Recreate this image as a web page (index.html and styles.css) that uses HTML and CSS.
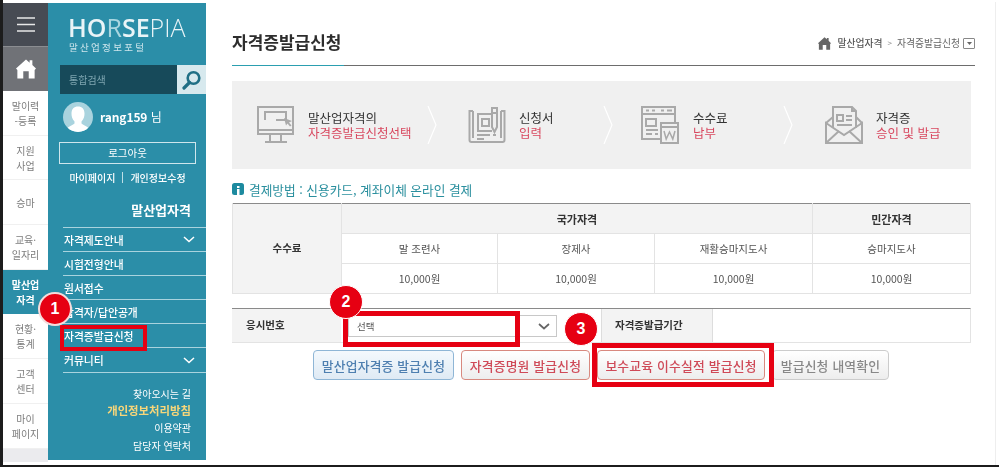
FILE: index.html
```html
<!DOCTYPE html>
<html lang="ko">
<head>
<meta charset="utf-8">
<title>자격증발급신청</title>
<link rel="stylesheet" href="styles.css">
</head>
<body>
<div class="page">
  <nav class="rail">
    <div class="rail-menu"><svg width="18" height="15" viewBox="0 0 18 15"><path d="M0 1h18M0 7.500h18M0 14h18" stroke="#e8e8e8" stroke-width="1.500"/></svg></div>
    <div class="rail-home"><svg width="20" height="20" viewBox="0 0 22 21"><path d="M11 0 L15 3.500V1h3v5l4 4-1.500 1.500V21H14v-8H8v8H1.500V11.500L0 10z" fill="#fff"/></svg></div>
    <a class="rail-item">말이력<br>-등록</a>
    <a class="rail-item">지원<br>사업</a>
    <a class="rail-item">승마</a>
    <a class="rail-item">교육·<br>일자리</a>
    <a class="rail-item active">말산업<br>자격</a>
    <a class="rail-item">현황·<br>통계</a>
    <a class="rail-item">고객<br>센터</a>
    <a class="rail-item">마이<br>페이지</a>
    <div class="rail-end"></div>
  </nav>

  <aside class="side">
    <div class="logo">
      <div class="logo-word"><b>HO</b><i>R</i><b>SE</b><span>PIA</span></div>
      <div class="logo-sub">말산업정보포털</div>
    </div>
    <div class="search">
      <div class="search-input">통합검색</div>
      <div class="search-btn"><svg width="20" height="20" viewBox="0 0 20 20"><circle cx="11.500" cy="8" r="5.800" fill="none" stroke="#1f6f85" stroke-width="2.600"/><path d="M7.500 12.500 2 18" stroke="#1f6f85" stroke-width="3.200" stroke-linecap="round"/></svg></div>
    </div>
    <div class="user">
      <svg class="avatar" width="30" height="30" viewBox="0 0 30 30"><circle cx="15" cy="15" r="15" fill="#a9d3de"/><clipPath id="av"><circle cx="15" cy="15" r="15"/></clipPath><g clip-path="url(#av)"><path d="M3 31c0-7 6-7 8.500-9.500v-2C9 17 8.500 14 8.500 11.500 8.500 7 11 4.500 15 4.500s6.500 2.500 6.500 7c0 2.500-.5 5.500-3 8v2C21 24 27 24 27 31z" fill="#fff"/></g></svg>
      <span class="user-name"><b>rang159</b> 님</span>
    </div>
    <div class="logout">로그아웃</div>
    <div class="user-links"><span>마이페이지</span><em></em><span>개인정보수정</span></div>
    <h2 class="side-title">말산업자격</h2>
    <ul class="side-menu">
      <li>자격제도안내<svg width="12" height="7" viewBox="0 0 12 7"><path d="M1 1l5 4.500L11 1" fill="none" stroke="#fff" stroke-width="1.500"/></svg></li>
      <li>시험전형안내</li>
      <li>원서접수</li>
      <li>합격자/답안공개</li>
      <li>자격증발급신청</li>
      <li>커뮤니티<svg width="12" height="7" viewBox="0 0 12 7"><path d="M1 1l5 4.500L11 1" fill="none" stroke="#fff" stroke-width="1.500"/></svg></li>
    </ul>
    <div class="side-foot">
      <div>찾아오시는 길</div>
      <div class="privacy">개인정보처리방침</div>
      <div>이용약관</div>
      <div>담당자 연락처</div>
    </div>
  </aside>

  <main class="main">
    <header class="head">
      <h1>자격증발급신청</h1>
      <div class="crumb">
        <svg width="13" height="13" viewBox="0 0 22 21"><path d="M11 0 L15 3.500V1h3v5l4 4-1.500 1.500V21H14v-8H8v8H1.500V11.500L0 10z" fill="#666"/></svg>
        <b>말산업자격</b><i>&gt;</i><span>자격증발급신청</span><u><svg width="5" height="3" viewBox="0 0 5 3"><path d="M0 0h5L2.500 3z" fill="#666"/></svg></u>
      </div>
    </header>

    <section class="steps">
      <div class="step s1">
        <svg width="38" height="38" viewBox="0 0 38 38" fill="none" stroke="#a9a9a9" stroke-width="2"><rect x="1" y="1" width="35" height="27"/><path d="M1 24h35M13 28v7M24 28v7M8 36h22" /><path d="M8 14V6h21v8H19"/><path d="M27 12l8 3-3 1.500 2.500 3-1.500 1-2.500-3-1.500 2z" fill="#a9a9a9" stroke="none"/></svg>
        <div><p>말산업자격의</p><p class="pink">자격증발급신청선택</p></div>
      </div>
      <div class="chev"><svg width="10" height="38" viewBox="0 0 10 38"><path d="M1 0l8 19-8 19" fill="none" stroke="#fff" stroke-width="1.200"/></svg></div>
      <div class="step s2">
        <svg width="38" height="38" viewBox="0 0 38 38" fill="none" stroke="#a9a9a9" stroke-width="2"><path d="M5 5H1.500v29c0 1 1 2 2 2h31c1 0 2-1 2-2V5H33"/><path d="M5 5v27M33 5v27"/><path d="M24 8H10v17h14"/><rect x="14" y="13" width="7" height="7"/><path d="M24 2h5v19l-2.500 5-2.500-5zM24 7h5M9 29h13M25 29h3M9 33h7"/></svg>
        <div><p>신청서</p><p class="pink">입력</p></div>
      </div>
      <div class="chev"><svg width="10" height="38" viewBox="0 0 10 38"><path d="M1 0l8 19-8 19" fill="none" stroke="#fff" stroke-width="1.200"/></svg></div>
      <div class="step s3">
        <svg width="38" height="38" viewBox="0 0 38 38" fill="none" stroke="#a9a9a9" stroke-width="2"><path d="M20 33H1V1h33v16M1 8h33"/><path d="M5 4.500h3M11 4.500h3M20 4.500h3M26 4.500h5M5 13h10v7H5zM5 24h12M5 28h6M14 28h3"/><rect x="20" y="17" width="17" height="20"/><path d="M20 21h17"/><path d="M23 25l2.200 8 3.300-7 3.300 7 2.200-8" stroke-width="1.500"/></svg>
        <div><p>수수료</p><p class="pink">납부</p></div>
      </div>
      <div class="chev"><svg width="10" height="38" viewBox="0 0 10 38"><path d="M1 0l8 19-8 19" fill="none" stroke="#fff" stroke-width="1.200"/></svg></div>
      <div class="step s4">
        <svg width="38" height="38" viewBox="0 0 38 38" fill="none" stroke="#a9a9a9" stroke-width="2"><path d="M1 17v20h36V17L19 29z"/><path d="M1 37l13-12M37 37L24 25M1 17l7-6M37 17l-6-6M8 22V1h19l4 4v17"/><path d="M27 1v4h4M12 9h6v6h-6zM21 10h6M21 14h6M12 19h15" /></svg>
        <div><p>자격증</p><p class="pink">승인 및 발급</p></div>
      </div>
    </section>

    <p class="pay"><svg width="12" height="12" viewBox="0 0 12 12"><rect width="12" height="12" rx="2.500" fill="#1d8a9f"/><path d="M5 3h2.500v2H5zM5 6h2.500v6H5z" fill="#fff"/></svg>결제방법 : 신용카드, 계좌이체 온라인 결제</p>

    <table class="fee">
      <colgroup><col class="c1"><col class="c2"><col class="c3"><col class="c4"><col></colgroup>
      <tr><th rowspan="3" class="lead">수수료</th><th colspan="3">국가자격</th><th>민간자격</th></tr>
      <tr><td>말 조련사</td><td>장제사</td><td>재활승마지도사</td><td>승마지도사</td></tr>
      <tr><td>10,000원</td><td>10,000원</td><td>10,000원</td><td>10,000원</td></tr>
    </table>

    <div class="exam">
      <div class="exam-th first">응시번호</div>
      <div class="exam-sel"><div class="select"><span>선택</span><svg width="12" height="7" viewBox="0 0 12 7"><path d="M1 1l5 4.500L11 1" fill="none" stroke="#666" stroke-width="1.700"/></svg></div></div>
      <div class="exam-th second">자격증발급기간</div>
      <div class="exam-td"></div>
    </div>

    <div class="buttons">
      <a class="btn blue">말산업자격증 발급신청</a>
      <a class="btn red">자격증명원 발급신청</a>
      <a class="btn red wide">보수교육 이수실적 발급신청</a>
      <a class="btn gray">발급신청 내역확인</a>
    </div>
  </main>
</div>

<div class="mark box1"></div>
<div class="mark box2"></div>
<div class="mark box3"></div>
<div class="badge b1">1</div>
<div class="badge b2">2</div>
<div class="badge b3">3</div>
</body>
</html>
```
FILE: styles.css
```css
* { box-sizing: border-box; }
html, body { margin: 0; padding: 0; }
body {
  width: 999px; height: 467px; overflow: hidden; position: relative;
  background: #fff; color: #333;
  font-family: "Noto Sans CJK KR", "Noto Sans", sans-serif;
  border-left: 3px solid #1c1c1c;
  border-bottom: 2px solid #1c1c1c;
}
.page { display: flex; height: 465px; padding-top: 1px; margin-top: 2px; width: 993px; border-top: 0; border-right: 1px solid #eee; filter: blur(.35px); }
p, h1, h2, ul { margin: 0; padding: 0; }

/* rail */
.rail { width: 45px; display: flex; flex-direction: column; flex: none; }
.rail-menu { height: 44px; background: #474b53; display: flex; align-items: center; justify-content: center; border-bottom: 1px solid #8b8d91; }
.rail-home { height: 44px; background: #707277; display: flex; align-items: center; justify-content: center; }
.rail-item { height: 44.700px; display: flex; align-items: center; justify-content: center; text-align: center; font-size: 10px; line-height: 15px; color: #7d7d7d; border-bottom: 1px solid #f0f0f0; }
.rail-item.active { background: #2b8ea8; color: #fff; font-weight: 700; border-bottom: 0; }
.rail-end { height: 13px; background: #ebebee; }

/* side */
.side { width: 158px; height: 457px; flex: none; background: #2b8ea8; color: #fff; padding-top: 13px; }
.logo { padding-left: 20px; height: 49px; }
.logo-word { font-family: "Open Sans", sans-serif; font-size: 25px; line-height: 23px; letter-spacing: 0; color: #e9f4f7; white-space: nowrap; }
.logo-word b { font-weight: 600; }
.logo-word i { font-style: normal; font-weight: 400; color: #a9d6e0; }
.logo-word span { font-weight: 300; }
.logo-sub { font-size: 9.500px; line-height: 13px; letter-spacing: 2.300px; color: #cfe6ec; margin: 2px 0 0 1px; }
.search { display: flex; height: 29px; margin-left: 12px; }
.search-input { width: 117px; background: #174a5a; color: #7fa6b1; font-size: 10px; line-height: 29px; padding-left: 9px; }
.search-btn { width: 29px; background: #d7e9ee; display: flex; align-items: center; justify-content: center; }
.user { display: flex; align-items: center; height: 30px; margin: 8px 0 0 15px; }
.avatar { flex: none; }
.user-name { font-size: 12px; margin: -1px 0 0 7px; }
.user-name b { letter-spacing: -.1px; }
.logout { width: 137px; height: 22px; margin: 10px 0 0 11px; border: 1px solid #cfe6ec; font-size: 10.500px; line-height: 20px; text-align: center; }
.user-links { display: flex; align-items: center; justify-content: center; gap: 7px; width: 137px; margin: 6px 0 0 11px; font-size: 10px; line-height: 15px; font-weight: 500; white-space: nowrap; }
.user-links em { width: 1px; height: 11px; background: #bfdfe6; }
.side-title { font-size: 13px; line-height: 20px; font-weight: 700; text-align: right; padding-right: 15px; margin-top: 15px; }
.side-menu { list-style: none; margin: 7px 0 0 15px; border-top: 1px solid #a9d3de; }
.side-menu li { height: 24.100px; display: flex; align-items: center; justify-content: space-between; padding: 0 11px 0 1px; font-size: 10.800px; font-weight: 500; border-bottom: 1px solid #a9d3de; white-space: nowrap; }
.side-foot { margin-top: 12px; padding-right: 15px; text-align: right; font-size: 10px; line-height: 17.400px; }
.side-foot .privacy { color: #f6d67a; font-weight: 700; font-size: 11.400px; }

/* main */
.main { width: 739px; margin-left: 26px; flex: none; }
.head { height: 63px; width: 743px; display: flex; justify-content: space-between; align-items: flex-start; border-bottom: 1px solid #6d6d6d; position: relative; padding-top: 25px; }
.head::after { content: ""; position: absolute; left: 0; bottom: -1px; width: 112px; height: 1px; background: #2b9fb0; }
h1 { font-size: 17px; line-height: 28px; font-weight: 700; color: #2d2d2d; }
.crumb { display: flex; align-items: center; gap: 5px; font-size: 9.800px; line-height: 14px; color: #666; padding-top: 8px; }
.crumb b { font-weight: 500; margin-left: 1px; color: #555; }
.crumb i { font-style: normal; font-size: 8px; color: #888; }
.crumb u { width: 12px; height: 11px; border: 1px solid #888; border-radius: 1px; display: flex; align-items: center; justify-content: center; margin-left: -2px; }
.steps { height: 88px; margin-top: 15px; background: #f0f0f0; display: flex; align-items: center; }
.step { display: flex; align-items: center; gap: 13px; flex: none; }
.step p { font-size: 12.500px; line-height: 15px; color: #333; white-space: nowrap; }
.step p.pink { color: #d8485f; }
.chev { flex: none; display: flex; }
.s1 { width: 170px; margin-left: 25px; }
.s2 { width: 135px; margin-left: 31px; }
.s3 { width: 142px; margin-left: 28px; gap: 14px; }
.s4 { margin-left: 32px; }
.pay { display: flex; align-items: center; gap: 5px; height: 18px; margin-top: 11px; font-size: 12.700px; color: #2a8f9e; }

.fee { width: 739px; margin-top: 5px; border-collapse: collapse; table-layout: fixed; border-top: 1px solid #8a8a8a; }
.c1 { width: 109px; } .c2 { width: 156px; } .c3 { width: 157px; } .c4 { width: 158px; }
.fee th, .fee td { height: 30px; border: 1px solid #e3e3e3; text-align: center; font-size: 10.500px; padding: 0; color: #555; }
.fee tr:first-child th { border-top: 0; }
.fee th { background: #f3f3f3; color: #333; font-weight: 700; font-size: 11px; }
.fee th.lead { font-size: 10.500px; padding-bottom: 2px; }
.exam { display: flex; height: 35px; margin-top: 14px; border-top: 1px solid #8a8a8a; border-bottom: 1px solid #e3e3e3; border-right: 1px solid #e3e3e3; }
.exam-th { background: #f3f3f3; font-size: 10.500px; font-weight: 700; color: #333; display: flex; align-items: center; padding-bottom: 2px; }
.first { width: 109px; padding-left: 14px; }
.second { width: 112px; padding-left: 13px; border-left: 1px solid #ddd; border-right: 1px solid #ddd; }
.exam-sel { width: 260px; padding: 6px 0 0 7px; }
.exam-td { flex: 1; }
.select { width: 209px; height: 22px; border: 1px solid #c8c8c8; display: flex; align-items: center; justify-content: space-between; padding: 0 6px 0 8px; font-size: 9.500px; color: #555; background: #fff; }
.buttons { display: flex; gap: 7px; margin: 7px 0 0 81px; }
.btn { height: 30px; border-radius: 4px; border: 1px solid; display: flex; align-items: center; justify-content: center; font-size: 12.800px; font-weight: 500; letter-spacing: .2px; white-space: nowrap; background: linear-gradient(#fff, #ededed); }
.blue { width: 141px; color: #4e7fb0; border-color: #8fb6d6; background: linear-gradient(#f4f9fd, #dfeaf4); }
.red { width: 129px; color: #cf4a58; border-color: #d8897f; }
.wide { width: 168px; }
.gray { width: 117px; color: #888; border-color: #ccc; }

/* annotations */
.mark { position: absolute; border: 5px solid #e60012; }
.box1 { left: 57px; top: 325px; width: 87px; height: 26px; border-width: 4px; }
.box2 { left: 340px; top: 311px; width: 177px; height: 36px; }
.box3 { left: 589px; top: 343px; width: 182px; height: 44px; }
.badge { position: absolute; width: 34px; height: 34px; border-radius: 50%; background: #e60012; color: #fff; border: 1px solid #fff; display: flex; align-items: center; justify-content: center; font-family: "Liberation Sans", sans-serif; font-size: 16px; font-weight: 700; }
.b1 { left: 35px; top: 292px; border: 2px solid #f4dcdc; }
.b2 { left: 326px; top: 285px; }
.b3 { left: 561px; top: 312px; }
```
